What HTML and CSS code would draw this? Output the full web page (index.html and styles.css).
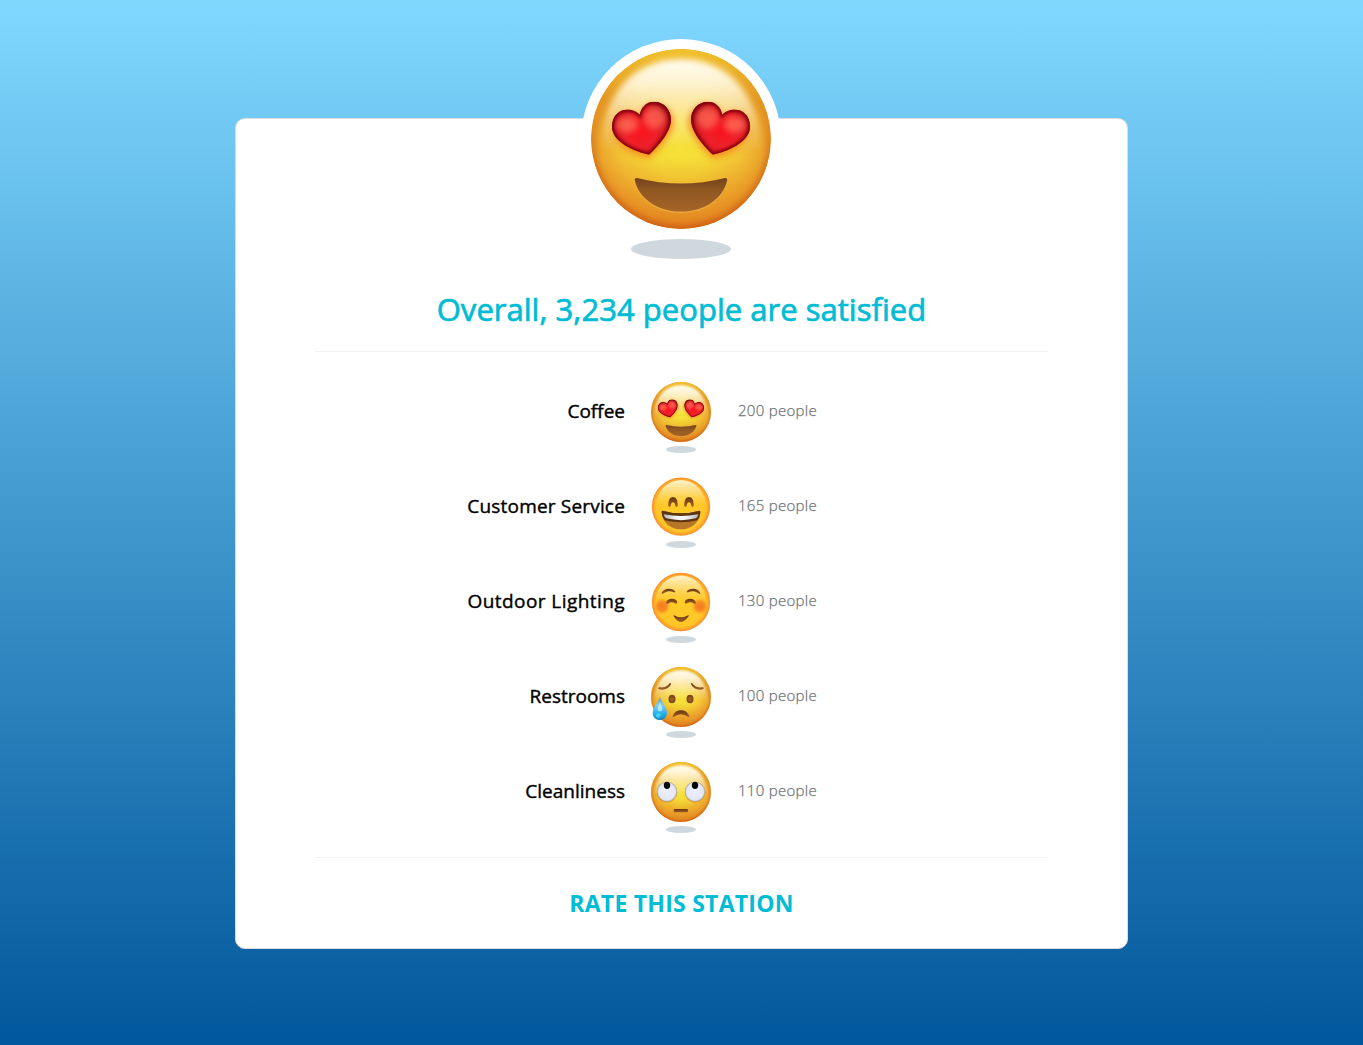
FILE: index.html
```html
<!DOCTYPE html>
<html lang="en">
<head>
<meta charset="utf-8">
<title>Station satisfaction</title>
<link rel="stylesheet" href="styles.css">
</head>
<body>
<svg class="defs" aria-hidden="true">
  <defs>
    <radialGradient id="skin" gradientUnits="userSpaceOnUse" cx="90" cy="101" r="98">
      <stop offset="0" stop-color="#f5e137"/><stop offset=".3" stop-color="#f5db38"/><stop offset=".6" stop-color="#f3c334"/><stop offset=".82" stop-color="#eba62b"/><stop offset="1" stop-color="#e08a20"/>
    </radialGradient>
    <linearGradient id="rim" x1="0" y1="0" x2="0" y2="1">
      <stop offset="0" stop-color="#eebd2a"/><stop offset=".3" stop-color="#e59a22"/><stop offset=".6" stop-color="#ce6b18"/><stop offset="1" stop-color="#c85210"/>
    </linearGradient>
    <linearGradient id="crown" x1="0" y1="0" x2="0" y2="1">
      <stop offset="0" stop-color="#f3c52c"/><stop offset=".3" stop-color="#f3c52c" stop-opacity="0"/><stop offset=".6" stop-color="#df721b" stop-opacity="0"/><stop offset="1" stop-color="#df721b" stop-opacity=".75"/>
    </linearGradient>
    <linearGradient id="shine" x1="0" y1="0" x2="0" y2="1">
      <stop offset="0" stop-color="#fffdf2"/><stop offset=".25" stop-color="#fffbe8" stop-opacity=".88"/><stop offset=".6" stop-color="#fff8d8" stop-opacity=".5"/><stop offset="1" stop-color="#fff5b0" stop-opacity="0"/>
    </linearGradient>
    <radialGradient id="heart-red" gradientUnits="userSpaceOnUse" cx="49" cy="81" r="35">
      <stop offset="0" stop-color="#fb121d"/><stop offset=".45" stop-color="#ee202a"/><stop offset=".75" stop-color="#cb1620"/><stop offset="1" stop-color="#85000c"/>
    </radialGradient>
    <linearGradient id="mouth-brown" x1="0" y1="0" x2="0" y2="1">
      <stop offset="0" stop-color="#74421a"/><stop offset=".35" stop-color="#8f5722"/><stop offset="1" stop-color="#a66427"/>
    </linearGradient>
    <linearGradient id="brown" x1="0" y1="0" x2="0" y2="1">
      <stop offset="0" stop-color="#663711"/><stop offset="1" stop-color="#a26027"/>
    </linearGradient>
    <radialGradient id="warm">
      <stop offset="0" stop-color="#ffcd27"/><stop offset=".84" stop-color="#ffc527"/><stop offset=".93" stop-color="#fca82b"/><stop offset="1" stop-color="#f58b2c"/>
    </radialGradient>
    <linearGradient id="warm-shine" x1="0" y1="0" x2="0" y2="1">
      <stop offset="0" stop-color="#fff3cd"/><stop offset=".5" stop-color="#ffe08a" stop-opacity=".75"/><stop offset="1" stop-color="#ffd24a" stop-opacity=".1"/>
    </linearGradient>
    <radialGradient id="blush">
      <stop offset="0" stop-color="#f57b20"/><stop offset=".55" stop-color="#f78422" stop-opacity=".9"/><stop offset="1" stop-color="#fa9a24" stop-opacity="0"/>
    </radialGradient>
    <linearGradient id="teeth" x1="0" y1="0" x2="1" y2="0">
      <stop offset="0" stop-color="#b5b6bb"/><stop offset=".35" stop-color="#f4f4f6"/><stop offset=".65" stop-color="#f4f4f6"/><stop offset="1" stop-color="#b5b6bb"/>
    </linearGradient>
    <linearGradient id="tear" x1="0" y1="0" x2="0" y2="1">
      <stop offset="0" stop-color="#3f96cb"/><stop offset=".35" stop-color="#7fcdf0"/><stop offset=".7" stop-color="#2cb2ea"/><stop offset="1" stop-color="#1c86bd"/>
    </linearGradient>
    <radialGradient id="eyeball">
      <stop offset="0" stop-color="#edf0fb"/><stop offset=".84" stop-color="#e4e8f5"/><stop offset="1" stop-color="#a9a5a8"/>
    </radialGradient>
    <filter id="soft1" x="-20%" y="-20%" width="140%" height="140%" color-interpolation-filters="sRGB"><feGaussianBlur stdDeviation="1.5"/></filter>
    <filter id="soft3" x="-40%" y="-40%" width="180%" height="180%" color-interpolation-filters="sRGB"><feGaussianBlur stdDeviation="3"/></filter>
    <clipPath id="face-clip"><circle cx="90" cy="90" r="90"/></clipPath>
    <clipPath id="heart-clip"><path d="M58 105C45 102 21 93 21 77C21 66 28 60 36 60C42 60 46 62 48.7 65C50 58 55 52 63 52C73 52 80 60 80 70C80 82 67 97 58 105Z"/></clipPath>

    <g id="glossy-face">
      <circle cx="90" cy="90" r="90" fill="url(#skin)"/>
      <g clip-path="url(#face-clip)">
        <circle cx="90" cy="90" r="90" fill="url(#crown)"/>
        <circle cx="90" cy="90" r="90" fill="none" stroke="url(#rim)" stroke-width="5" filter="url(#soft3)"/>
        <path d="M90 10C136 10 168 44 170 98C140 114 116 94 90 94C64 94 40 114 10 98C12 44 44 10 90 10Z" fill="url(#shine)" filter="url(#soft3)"/>
      </g>
    </g>
    <g id="heart">
      <path d="M58 109C45 106 23 97 23 81C23 66 28 62 36 62C42 62 46 64 48.7 67C50 60 55 54 63 54C73 54 83 62 83 72C83 84 67 101 58 109Z" fill="#f47b17" opacity=".75" filter="url(#soft3)"/>
      <g clip-path="url(#heart-clip)">
        <path d="M15 45H86V110H15Z" fill="url(#heart-red)"/>
        <ellipse cx="36" cy="75" rx="11" ry="8" fill="#ff7158" opacity=".75" filter="url(#soft3)"/>
        <ellipse cx="64" cy="68" rx="11" ry="11" fill="#ff6957" opacity=".75" filter="url(#soft3)"/>
        <path d="M58 105C45 102 21 93 21 77C21 66 28 60 36 60C42 60 46 62 48.7 65C50 58 55 52 63 52C73 52 80 60 80 70C80 82 67 97 58 105Z" fill="none" stroke="#800009" stroke-width="4" filter="url(#soft1)"/>
      </g>
    </g>
    <symbol id="hearts-face" viewBox="0 0 180 180">
      <use href="#glossy-face"/>
      <use href="#heart" y=".7"/>
      <use href="#heart" transform="matrix(-1 0 0 1 180 .7)"/>
      <path d="M47 130Q90 141 133 130Q137 129 136 133C132 151 114 164 90 164C66 164 48 151 44 133Q43 129 47 130Z" fill="#f0b74c" opacity=".55"/>
      <path d="M46 129Q90 140 134 129Q137 129 136 132C132 149 114 162.6 90 162.6C66 162.6 48 149 44 132Q43 129 46 129Z" fill="url(#mouth-brown)"/>
    </symbol>
    <g id="warm-face">
      <circle cx="90" cy="89" r="87.5" fill="url(#warm)"/>
      <path d="M90 10C130 10 158 39 164 78C140 91 115 83 90 83C65 83 40 91 16 78C22 39 50 10 90 10Z" fill="url(#warm-shine)" filter="url(#soft1)"/>
    </g>
    <symbol id="grin-face" viewBox="0 0 180 180">
      <use href="#warm-face"/>
      <path id="grin-eye" d="M52 86C51 70 57 60 66 60C75 60 81 70 80 86C79 91 74 90 73 86C71 78 70 76 66 76C62 76 61 78 59 86C58 90 53 91 52 86Z" fill="url(#brown)"/>
      <use href="#grin-eye" x="48"/>
      <path d="M35 101Q90 117 145 101Q149 101 148 107C145 138 120 157 90 157C60 157 35 138 32 107Q31 101 35 101Z" fill="#b87728"/>
      <path d="M35 101Q90 117 145 101Q149 101 148 107Q147 121 139 130Q90 142 41 130Q33 121 32 107Q31 101 35 101Z" fill="#5c3512"/>
      <path d="M38 112Q90 122 142 112Q141 120 134 124Q90 135 46 124Q39 120 38 112Z" fill="url(#teeth)"/>
    </symbol>
    <symbol id="blush-face" viewBox="0 0 180 180">
      <use href="#warm-face" y="1"/>
      <circle cx="33" cy="103" r="25" fill="url(#blush)"/>
      <circle cx="147" cy="103" r="25" fill="url(#blush)"/>
      <g id="blush-side" fill="url(#brown)">
        <path d="M32 63C39 47 62 47 72 57C74 61 72 62 68 61C56 55 46 57 36 65Q32 67 32 63Z"/>
        <path d="M45 92C48 77 75 76 79 90C79 95 75 96 72 94C64 89 59 90 51 95Q46 97 45 92Z"/>
      </g>
      <use href="#blush-side" transform="matrix(-1 0 0 1 180 0)"/>
      <path d="M67 131Q68 128 72 131Q90 141 108 131Q113 128 114 131C106 142 99 150 90 150C81 150 74 142 67 131Z" fill="url(#brown)"/>
    </symbol>
    <symbol id="sad-face" viewBox="0 0 180 180">
      <use href="#glossy-face"/>
      <path id="sad-brow" d="M57 48Q60 47 60 51C54 65 37 72 23 66Q19 63 24 61C38 63 49 59 57 48Z" fill="url(#brown)"/>
      <use href="#sad-brow" transform="matrix(-1 0 0 1 180 0)"/>
      <ellipse cx="63" cy="96" rx="10.5" ry="13" fill="#80481a"/>
      <ellipse cx="117" cy="96" rx="10.5" ry="13" fill="#80481a"/>
      <ellipse cx="63" cy="97" rx="6" ry="8" fill="#995b25" filter="url(#soft1)"/>
      <ellipse cx="117" cy="97" rx="6" ry="8" fill="#995b25" filter="url(#soft1)"/>
      <path d="M65 149C69 136 78 130 90 130C102 130 111 136 115 149Q114 151 111 149Q90 134 69 149Q66 151 65 149Z" fill="url(#brown)"/>
      <path d="M27 90C31 107 48 118 48 138C48 151 39 159 27 159C14 159 5 151 5 138C5 118 23 107 27 90Z" fill="url(#tear)"/>
      <path d="M27 101C29 114 35 121 34 128C33 134 21 134 20 128C19 121 25 114 27 101Z" fill="#dcf5ff" opacity=".65" filter="url(#soft1)"/>
      <ellipse cx="22" cy="145" rx="7" ry="7" fill="#35d4ff" filter="url(#soft1)"/>
    </symbol>
    <symbol id="roll-face" viewBox="0 0 180 180">
      <use href="#glossy-face"/>
      <g id="roll-eye">
        <circle cx="48" cy="91" r="31" fill="#d7791d" opacity=".55" filter="url(#soft1)"/>
        <circle cx="48" cy="89" r="30" fill="url(#eyeball)"/>
        <ellipse cx="48" cy="70" rx="9.5" ry="11" fill="#090706"/>
      </g>
      <use href="#roll-eye" x="84"/>
      <rect x="68" y="141" width="43" height="10" rx="4" fill="url(#brown)"/>
    </symbol>
  </defs>
</svg>

<main class="card">
  <div class="hero">
    <svg class="hero-face"><use href="#hearts-face"/></svg>
    <div class="hero-shadow"></div>
  </div>
  <h1 class="headline">Overall, 3,234 people are satisfied</h1>
  <ul class="ratings">
    <li class="rating"><span class="label">Coffee</span><span class="mood"><svg class="face"><use href="#hearts-face"/></svg><i class="shadow"></i></span><span class="count">200 people</span></li>
    <li class="rating"><span class="label label-wide">Customer Service</span><span class="mood"><svg class="face"><use href="#grin-face"/></svg><i class="shadow"></i></span><span class="count">165 people</span></li>
    <li class="rating"><span class="label label-wider">Outdoor Lighting</span><span class="mood"><svg class="face"><use href="#blush-face"/></svg><i class="shadow"></i></span><span class="count">130 people</span></li>
    <li class="rating"><span class="label">Restrooms</span><span class="mood"><svg class="face"><use href="#sad-face"/></svg><i class="shadow"></i></span><span class="count">100 people</span></li>
    <li class="rating"><span class="label">Cleanliness</span><span class="mood"><svg class="face"><use href="#roll-face"/></svg><i class="shadow"></i></span><span class="count">110 people</span></li>
  </ul>
  <a class="rate">RATE THIS STATION</a>
</main>
</body>
</html>
```
FILE: styles.css
```css
* { box-sizing: border-box; }
body {
  margin: 0;
  min-height: 1045px;
  padding-top: 118px;
  background: linear-gradient(#80d8ff, #01579b);
  font-family: "Open Sans", "Noto Sans", sans-serif;
  color: #000;
}
.defs { position: absolute; width: 0; height: 0; }
.card {
  width: 893px;
  height: 831px;
  margin: 0 auto;
  padding: 0 79px;
  display: flex;
  flex-direction: column;
  background: #fff;
  border: 1px solid #dcdcdc;
  border-radius: 10px;
}
.hero {
  width: 200px;
  margin: -80px 0 0 266px;
  display: flex;
  flex-direction: column;
  align-items: center;
}
.hero-face {
  width: 200px;
  height: 200px;
  flex: none;
  padding: 10px;
  border-radius: 50%;
  background: #fff;
}
.hero-shadow {
  width: 100px;
  height: 20px;
  border-radius: 50%;
  background: #cfd8dc;
}
.headline {
  height: 93px;
  margin: 0;
  padding-top: 28px;
  border-bottom: 1px solid #f3f3f3;
  color: #00bcd4;
  font-size: 31px;
  line-height: 44px;
  letter-spacing: .03px;
  font-weight: 400;
  -webkit-text-stroke: .7px #00bcd4;
  text-align: center;
  white-space: nowrap;
}
.ratings {
  list-style: none;
  height: 506px;
  margin: 0;
  padding: 30px 0 0;
  border-bottom: 1px solid #f3f3f3;
}
.rating {
  height: 95px;
  display: grid;
  grid-template-columns: 310px 60px 1fr;
  align-items: start;
}
.label {
  font-size: 19px;
  line-height: 58px;
  font-weight: 400;
  -webkit-text-stroke: .4px #000;
  text-align: right;
  white-space: nowrap;
}
.label-wide { letter-spacing: .18px; }
.label-wider { letter-spacing: .43px; }
.mood {
  margin-left: 26px;
  width: 60px;
  display: flex;
  flex-direction: column;
  align-items: center;
  gap: 4px;
}
.face { width: 60px; height: 60px; display: block; }
.shadow { width: 30px; height: 7px; border-radius: 50%; background: #cfd8dc; }
.count {
  margin-left: 53px;
  color: #6f7376;
  font-size: 15px;
  line-height: 56px;
  letter-spacing: .28px;
  font-weight: 300;
  -webkit-text-stroke: .25px #6f7376;
  white-space: nowrap;
}
.rate {
  color: #00bcd4;
  font-size: 23px;
  line-height: 32px;
  letter-spacing: .25px;
  font-weight: 700;
  text-align: center;
  margin-top: 29px;
}
```
